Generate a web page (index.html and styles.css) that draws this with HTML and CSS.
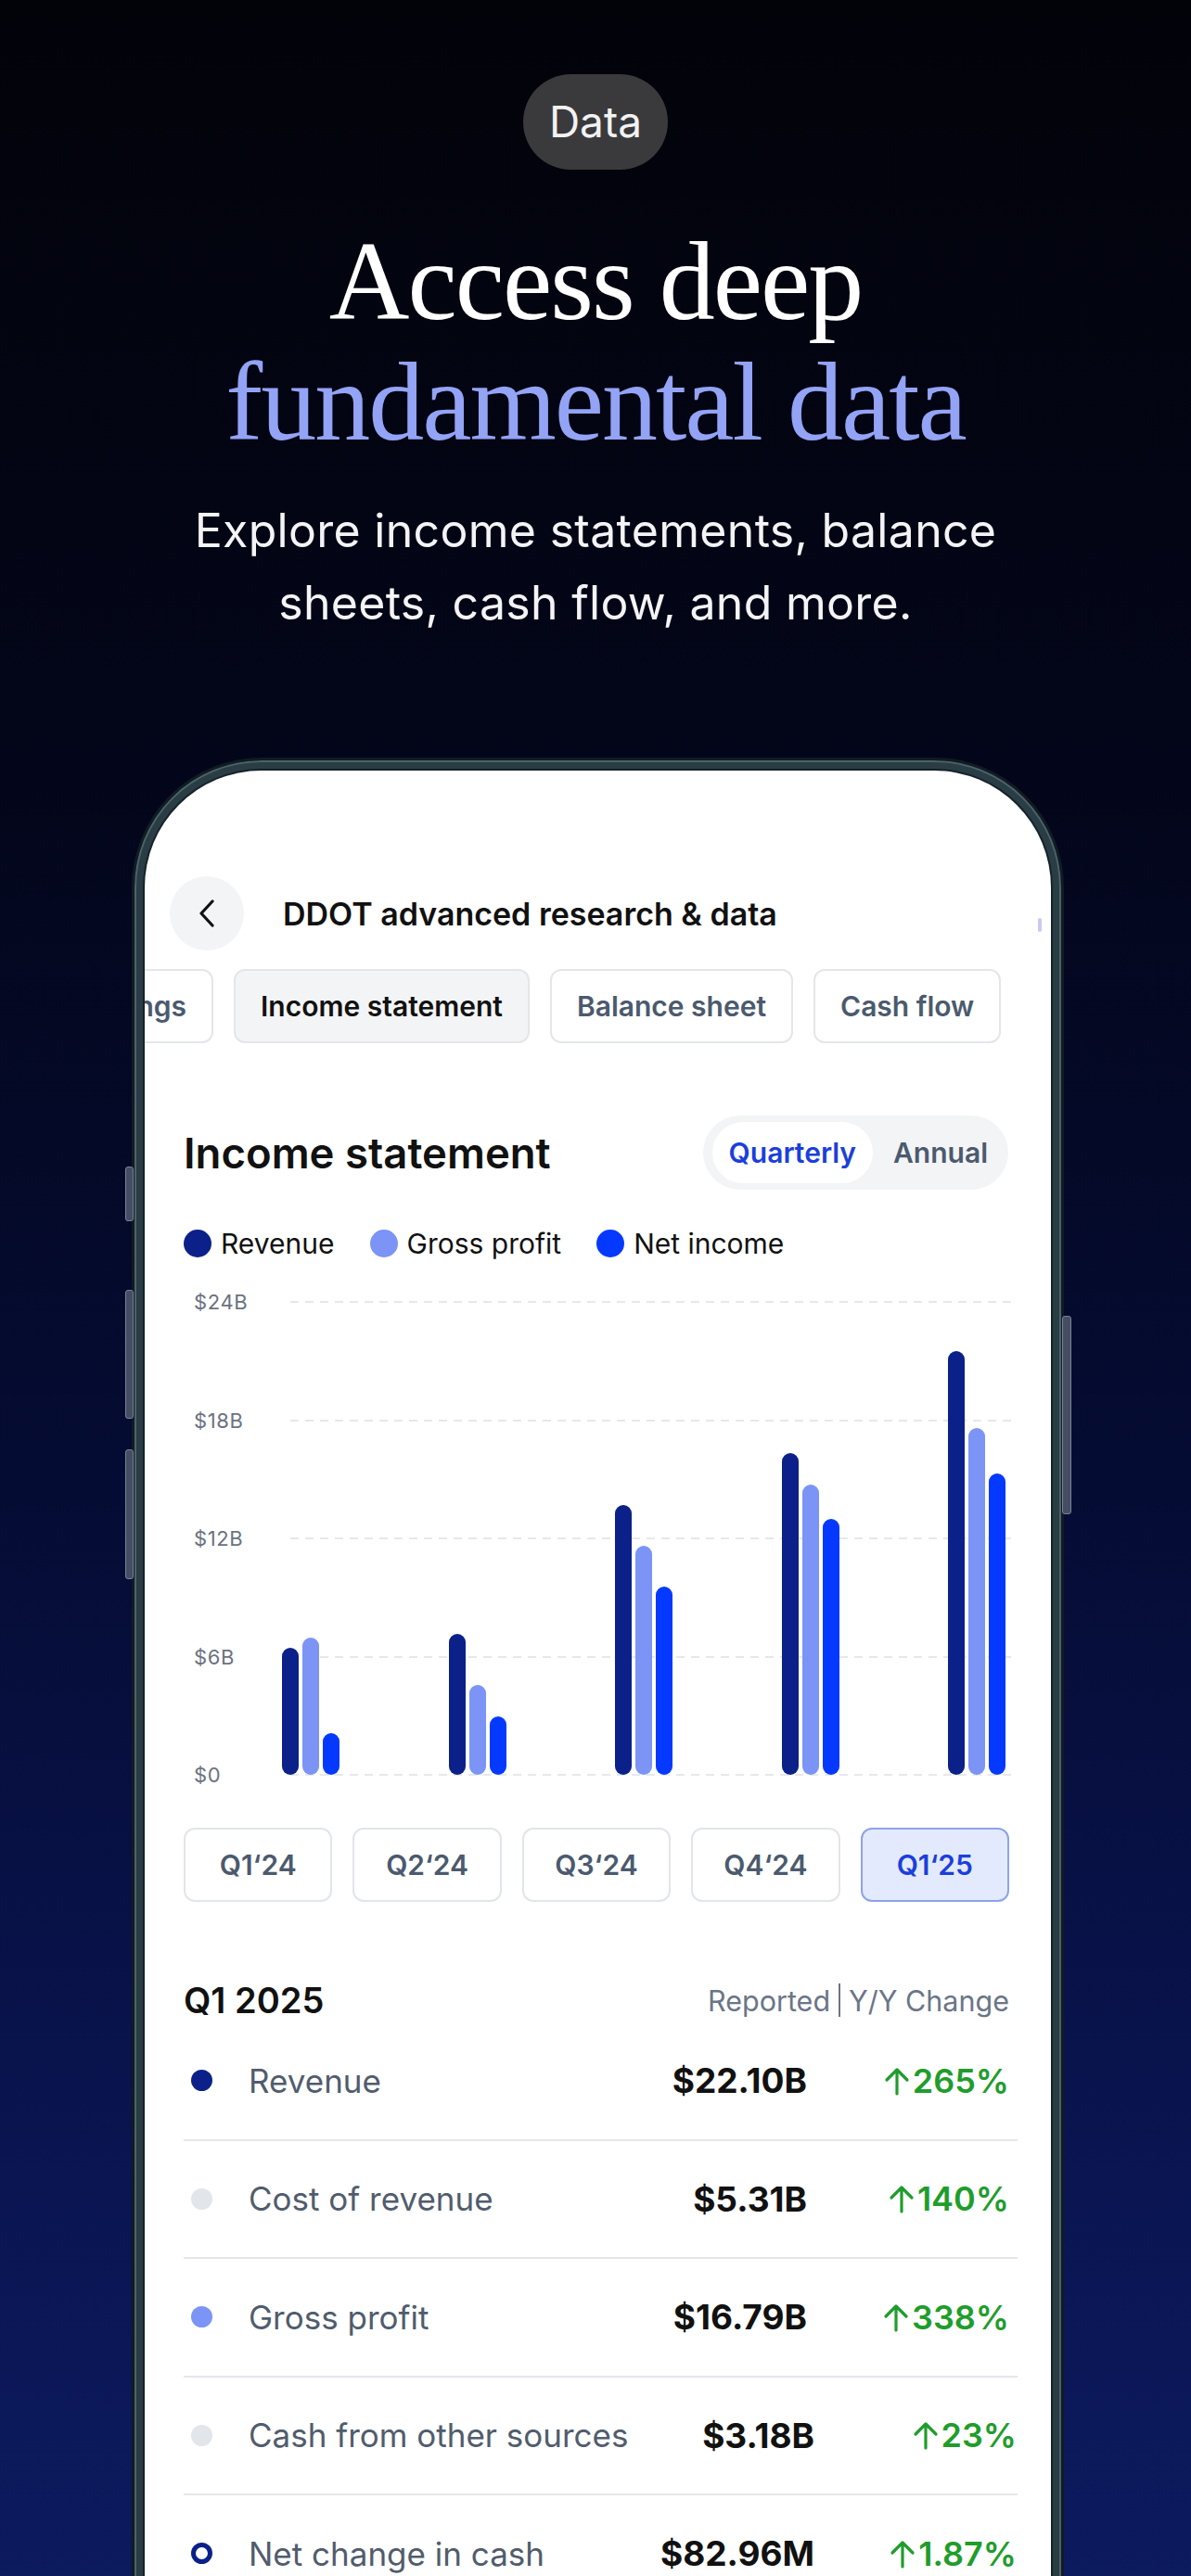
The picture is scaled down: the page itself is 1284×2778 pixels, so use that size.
FILE: index.html
```html
<!DOCTYPE html>
<html lang="en">
<head>
    <meta charset="UTF-8">
    <title>Access deep fundamental data</title>
    <link rel="stylesheet" href="styles.css">
</head>
<body>
    <div class="hero">
        <div class="pill">Data</div>
        <h1 class="headline">Access deep<br><span class="accent">fundamental data</span></h1>
        <p class="subtitle">Explore income statements, balance<br>sheets, cash flow, and more.</p>
    </div>

    <div class="phone">
        <span class="side-btn left mute"></span>
        <span class="side-btn left vol-up"></span>
        <span class="side-btn left vol-down"></span>
        <span class="side-btn right power"></span>

        <div class="screen">
            <div class="topbar">
                <div class="back">
                    <svg width="20" height="30" viewBox="0 0 20 30"><polyline points="16,2 4,15 16,28" fill="none" stroke="#111" stroke-width="3.2" stroke-linecap="round" stroke-linejoin="round"/></svg>
                </div>
                <div class="title">DDOT advanced research &amp; data</div>
                <span class="scroll-tick"></span>
            </div>

            <div class="tabs">
                <div class="tab clipped">Earnings</div>
                <div class="tab active">Income statement</div>
                <div class="tab">Balance sheet</div>
                <div class="tab">Cash flow</div>
            </div>

            <div class="content">
                <div class="section-head">
                    <h2>Income statement</h2>
                    <div class="segmented">
                        <span class="seg on">Quarterly</span>
                        <span class="seg">Annual</span>
                    </div>
                </div>

                <div class="legend">
                    <span class="key"><i class="dot rev"></i>Revenue</span>
                    <span class="key"><i class="dot gross"></i>Gross profit</span>
                    <span class="key"><i class="dot net"></i>Net income</span>
                </div>

                <div class="chart">
                    <div class="grid">
                        <div class="gridrow"><span class="ylabel">$24B</span><span class="gridline"></span></div>
                        <div class="gridrow"><span class="ylabel">$18B</span><span class="gridline"></span></div>
                        <div class="gridrow"><span class="ylabel">$12B</span><span class="gridline"></span></div>
                        <div class="gridrow"><span class="ylabel">$6B</span><span class="gridline"></span></div>
                        <div class="gridrow"><span class="ylabel">$0</span><span class="gridline"></span></div>
                    </div>
                    <div class="bars">
                        <div class="group">
                            <span class="bar rev" style="height:137px"></span>
                            <span class="bar gross" style="height:148px"></span>
                            <span class="bar net" style="height:45px"></span>
                        </div>
                        <div class="group">
                            <span class="bar rev" style="height:152px"></span>
                            <span class="bar gross" style="height:97px"></span>
                            <span class="bar net" style="height:63px"></span>
                        </div>
                        <div class="group">
                            <span class="bar rev" style="height:291px"></span>
                            <span class="bar gross" style="height:247px"></span>
                            <span class="bar net" style="height:203px"></span>
                        </div>
                        <div class="group">
                            <span class="bar rev" style="height:347px"></span>
                            <span class="bar gross" style="height:313px"></span>
                            <span class="bar net" style="height:276px"></span>
                        </div>
                        <div class="group">
                            <span class="bar rev" style="height:457px"></span>
                            <span class="bar gross" style="height:374px"></span>
                            <span class="bar net" style="height:325px"></span>
                        </div>
                    </div>
                </div>

                <div class="quarters">
                    <div class="qbtn">Q1‘24</div>
                    <div class="qbtn">Q2‘24</div>
                    <div class="qbtn">Q3‘24</div>
                    <div class="qbtn">Q4‘24</div>
                    <div class="qbtn on">Q1‘25</div>
                </div>

                <div class="summary-head">
                    <span class="period">Q1 2025</span>
                    <span class="cols">Reported<i class="divider"></i>Y/Y Change</span>
                </div>

                <div class="rows">
                    <div class="row">
                        <i class="dot sm rev"></i>
                        <span class="label">Revenue</span>
                        <span class="value">$22.10B</span>
                        <span class="change"><svg width="30" height="32" viewBox="0 0 30 32"><path d="M15 30V4M4 15L15 4L26 15" fill="none" stroke="#1f9d2c" stroke-width="3.2" stroke-linecap="round" stroke-linejoin="round"/></svg>265%</span>
                    </div>
                    <div class="row">
                        <i class="dot sm muted"></i>
                        <span class="label">Cost of revenue</span>
                        <span class="value">$5.31B</span>
                        <span class="change"><svg width="30" height="32" viewBox="0 0 30 32"><path d="M15 30V4M4 15L15 4L26 15" fill="none" stroke="#1f9d2c" stroke-width="3.2" stroke-linecap="round" stroke-linejoin="round"/></svg>140%</span>
                    </div>
                    <div class="row">
                        <i class="dot sm gross"></i>
                        <span class="label">Gross profit</span>
                        <span class="value">$16.79B</span>
                        <span class="change"><svg width="30" height="32" viewBox="0 0 30 32"><path d="M15 30V4M4 15L15 4L26 15" fill="none" stroke="#1f9d2c" stroke-width="3.2" stroke-linecap="round" stroke-linejoin="round"/></svg>338%</span>
                    </div>
                    <div class="row wide">
                        <i class="dot sm muted"></i>
                        <span class="label">Cash from other sources</span>
                        <span class="value">$3.18B</span>
                        <span class="change"><svg width="30" height="32" viewBox="0 0 30 32"><path d="M15 30V4M4 15L15 4L26 15" fill="none" stroke="#1f9d2c" stroke-width="3.2" stroke-linecap="round" stroke-linejoin="round"/></svg>23%</span>
                    </div>
                    <div class="row wide">
                        <i class="dot sm ring"></i>
                        <span class="label">Net change in cash</span>
                        <span class="value">$82.96M</span>
                        <span class="change"><svg width="30" height="32" viewBox="0 0 30 32"><path d="M15 30V4M4 15L15 4L26 15" fill="none" stroke="#1f9d2c" stroke-width="3.2" stroke-linecap="round" stroke-linejoin="round"/></svg>1.87%</span>
                    </div>
                </div>
            </div>
        </div>
    </div>
</body>
</html>
```

FILE: styles.css
```css
html, body {
    margin: 0;
    height: 2778px;
    overflow: hidden;
}
body {
    font-family: "Inter", "Noto Sans", sans-serif;
    background: linear-gradient(180deg, #020309 0%, #03061a 30%, #050c34 58%, #0a1552 85%, #0c1a5e 100%);
}

/* hero */
.hero {
    padding-top: 80px;
    text-align: center;
}
.pill {
    width: fit-content;
    margin: 0 auto;
    height: 103px;
    line-height: 103px;
    padding: 0 28px;
    border-radius: 52px;
    background-color: #3a3a3c;
    color: #f2f2f2;
    font-size: 46px;
}
.headline {
    margin: 56px 0 0;
    font-family: "Liberation Serif", serif;
    font-weight: 400;
    font-size: 120px;
    line-height: 130px;
    letter-spacing: -2px;
    color: #fff;
}
.headline .accent {
    color: #93a3f5;
}
.subtitle {
    margin: 34px 0 0;
    font-size: 50px;
    line-height: 78px;
    letter-spacing: 0.3px;
    color: #f4f4f6;
}

/* phone */
.phone {
    position: relative;
    box-sizing: border-box;
    width: 1005px;
    height: 2100px;
    margin: 128px 0 0 142px;
    padding: 11px;
    border: 3px solid #111b21;
    border-radius: 140px;
    background-color: #2a3d44;
    box-shadow: inset 0 0 0 2px #4a636c;
}
.side-btn {
    position: absolute;
    width: 7px;
    border-radius: 3px;
    background-color: #454d62;
    border: 1px solid #7a8398;
}
.side-btn.left { left: -10px; }
.side-btn.right { right: -11px; width: 8px; }
.mute { top: 438px; height: 57px; }
.vol-up { top: 571px; height: 137px; }
.vol-down { top: 743px; height: 138px; }
.power { top: 599px; height: 212px; }

.screen {
    height: 100%;
    overflow: hidden;
    background-color: #fff;
    border-radius: 126px;
    box-shadow: 0 0 0 2px #15222a;
}

.topbar {
    display: flex;
    align-items: center;
    height: 80px;
    padding-top: 114px;
}
.back {
    flex: none;
    width: 80px;
    height: 80px;
    margin-left: 27px;
    border-radius: 50%;
    background-color: #f3f4f6;
    display: flex;
    align-items: center;
    justify-content: center;
}
.title {
    margin-left: 42px;
    font-size: 34px;
    font-weight: 600;
    color: #111;
}
.scroll-tick {
    margin: 24px 10px 0 auto;
    width: 4px;
    height: 15px;
    border-radius: 2px;
    background-color: #c9c9f2;
}

.tabs {
    display: flex;
    gap: 22px;
    margin-top: 20px;
}
.tab {
    flex: none;
    height: 80px;
    box-sizing: border-box;
    padding: 0 27px;
    border: 2px solid #e4e6ea;
    border-radius: 12px;
    font-size: 30px;
    font-weight: 600;
    line-height: 76px;
    color: #4b5a6e;
}
.tab.clipped {
    width: 190px;
    margin-left: -116px;
    text-align: right;
}
.tab.active {
    background-color: #f3f4f6;
    color: #111;
}

/* content */
.content {
    padding: 0 40px 0 42px;
}
.section-head {
    display: flex;
    align-items: center;
    justify-content: space-between;
    margin-top: 78px;
    margin-right: 6px;
}
.section-head h2 {
    margin: 0;
    font-size: 45.5px;
    font-weight: 600;
    color: #111;
}
.segmented {
    display: flex;
    padding: 7px 10px;
    border-radius: 41px;
    background-color: #f3f4f6;
}
.seg {
    height: 66px;
    line-height: 66px;
    padding: 0 12px 0 22px;
    font-size: 30px;
    font-weight: 600;
    color: #4b5a6e;
}
.seg.on {
    padding: 0 18px;
    border-radius: 33px;
    background-color: #fff;
    color: #1b3fdc;
}

.legend {
    display: flex;
    gap: 38px;
    margin-top: 40px;
    height: 36px;
    align-items: center;
}
.key {
    display: flex;
    align-items: center;
    gap: 10px;
    font-size: 30px;
    color: #111;
}
.dot {
    display: block;
    flex: none;
    width: 30px;
    height: 30px;
    border-radius: 50%;
}
.dot.rev, .bar.rev { background-color: #0b2189; }
.dot.gross, .bar.gross { background-color: #7b94f6; }
.dot.net, .bar.net { background-color: #0539ff; }
.dot.muted { background-color: #e2e5ea; }
.dot.ring {
    box-sizing: border-box;
    border: 5px solid #0b2189;
    background-color: #fff;
}

/* chart */
.chart {
    position: relative;
    margin-top: 31px;
}
.grid {
    height: 538px;
    display: flex;
    flex-direction: column;
    justify-content: space-between;
}
.gridrow {
    display: flex;
    align-items: center;
    height: 28px;
}
.ylabel {
    box-sizing: border-box;
    width: 115px;
    padding-left: 11px;
    font-size: 22px;
    letter-spacing: 0.6px;
    color: #6b7280;
}
.gridline {
    flex: 1;
    height: 2px;
    background: repeating-linear-gradient(90deg, #e6e8ec 0 9px, transparent 9px 16px);
}
.bars {
    position: absolute;
    left: 106px;
    right: 9px;
    bottom: 14px;
    display: flex;
    justify-content: space-between;
    align-items: flex-end;
}
.group {
    display: flex;
    align-items: flex-end;
    gap: 4px;
}
.bar {
    display: block;
    width: 18px;
    border-radius: 9px;
}

.quarters {
    display: grid;
    grid-template-columns: repeat(5, 1fr);
    gap: 22px;
    margin-top: 43px;
    margin-right: 5px;
}
.qbtn {
    height: 80px;
    box-sizing: border-box;
    border: 2px solid #e2e5ea;
    border-radius: 12px;
    text-align: center;
    line-height: 76px;
    font-size: 30px;
    font-weight: 600;
    color: #4b5a6e;
}
.qbtn.on {
    background-color: #e4eafd;
    border-color: #8ea2ea;
    color: #1b3fdc;
}

/* summary table */
.summary-head {
    display: flex;
    align-items: center;
    justify-content: space-between;
    height: 44px;
    margin-top: 84px;
    margin-right: 5px;
}
.period {
    font-size: 38px;
    font-weight: 600;
    color: #111;
}
.cols {
    display: flex;
    align-items: center;
    font-size: 30.5px;
    color: #6b7588;
}
.divider {
    display: block;
    width: 2px;
    height: 36px;
    margin: 0 9px;
    background-color: #6b7588;
}
.rows {
    margin-top: 2px;
    margin-right: -4px;
}
.row {
    display: flex;
    align-items: center;
    height: 125.5px;
    padding-right: 9px;
    border-bottom: 2px solid #e5e7eb;
}
.row.wide {
    padding-right: 1px;
}
.dot.sm {
    width: 23px;
    height: 23px;
    margin-left: 8px;
}
.label {
    margin-left: 39px;
    font-size: 35px;
    color: #515c6d;
}
.value {
    margin-left: auto;
    font-size: 37px;
    font-weight: 700;
    color: #111;
}
.change {
    display: flex;
    align-items: center;
    justify-content: flex-end;
    gap: 2px;
    width: 140px;
    margin-left: 78px;
    font-size: 36px;
    font-weight: 600;
    color: #1f9d2c;
}
```
